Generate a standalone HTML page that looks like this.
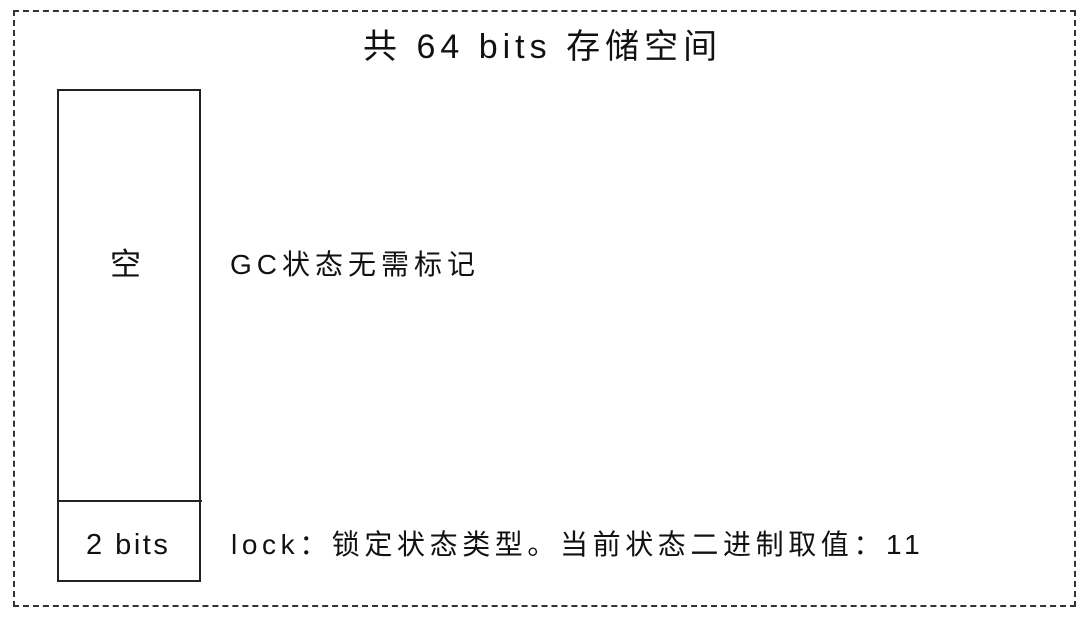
<!DOCTYPE html><html><head><meta charset="utf-8"><style>
body{margin:0;width:1088px;height:617px;background:#fff;position:relative;font-family:"Liberation Sans","Noto Sans CJK SC",sans-serif;color:#111;overflow:hidden}
.d{position:absolute;left:13px;top:10px;width:1063px;height:597px;border:2px dashed #333;box-sizing:border-box}
.b{position:absolute;left:57px;top:89px;width:144px;height:493px;border:2px solid #222;box-sizing:border-box}
.l{position:absolute;left:57px;top:500px;width:145px;height:0;border-top:2px solid #222}
.t{position:absolute;white-space:nowrap;line-height:1}
</style></head><body>
<div class="d"></div><div class="b"></div><div class="l"></div>
<div class="t" style="left:363px;top:30px;font-size:34px;letter-spacing:5px">共 64 bits 存储空间</div>
<div class="t" style="left:110px;top:249px;font-size:31px">空</div>
<div class="t" style="left:230px;top:251px;font-size:28px;letter-spacing:5px">GC状态无需标记</div>
<div class="t" style="left:86px;top:531px;font-size:29px;letter-spacing:2.5px">2 bits</div>
<div class="t" style="left:231px;top:531px;font-size:28px;letter-spacing:4.6px">lock：锁定状态类型。当前状态二进制取值：11</div>
</body></html>
